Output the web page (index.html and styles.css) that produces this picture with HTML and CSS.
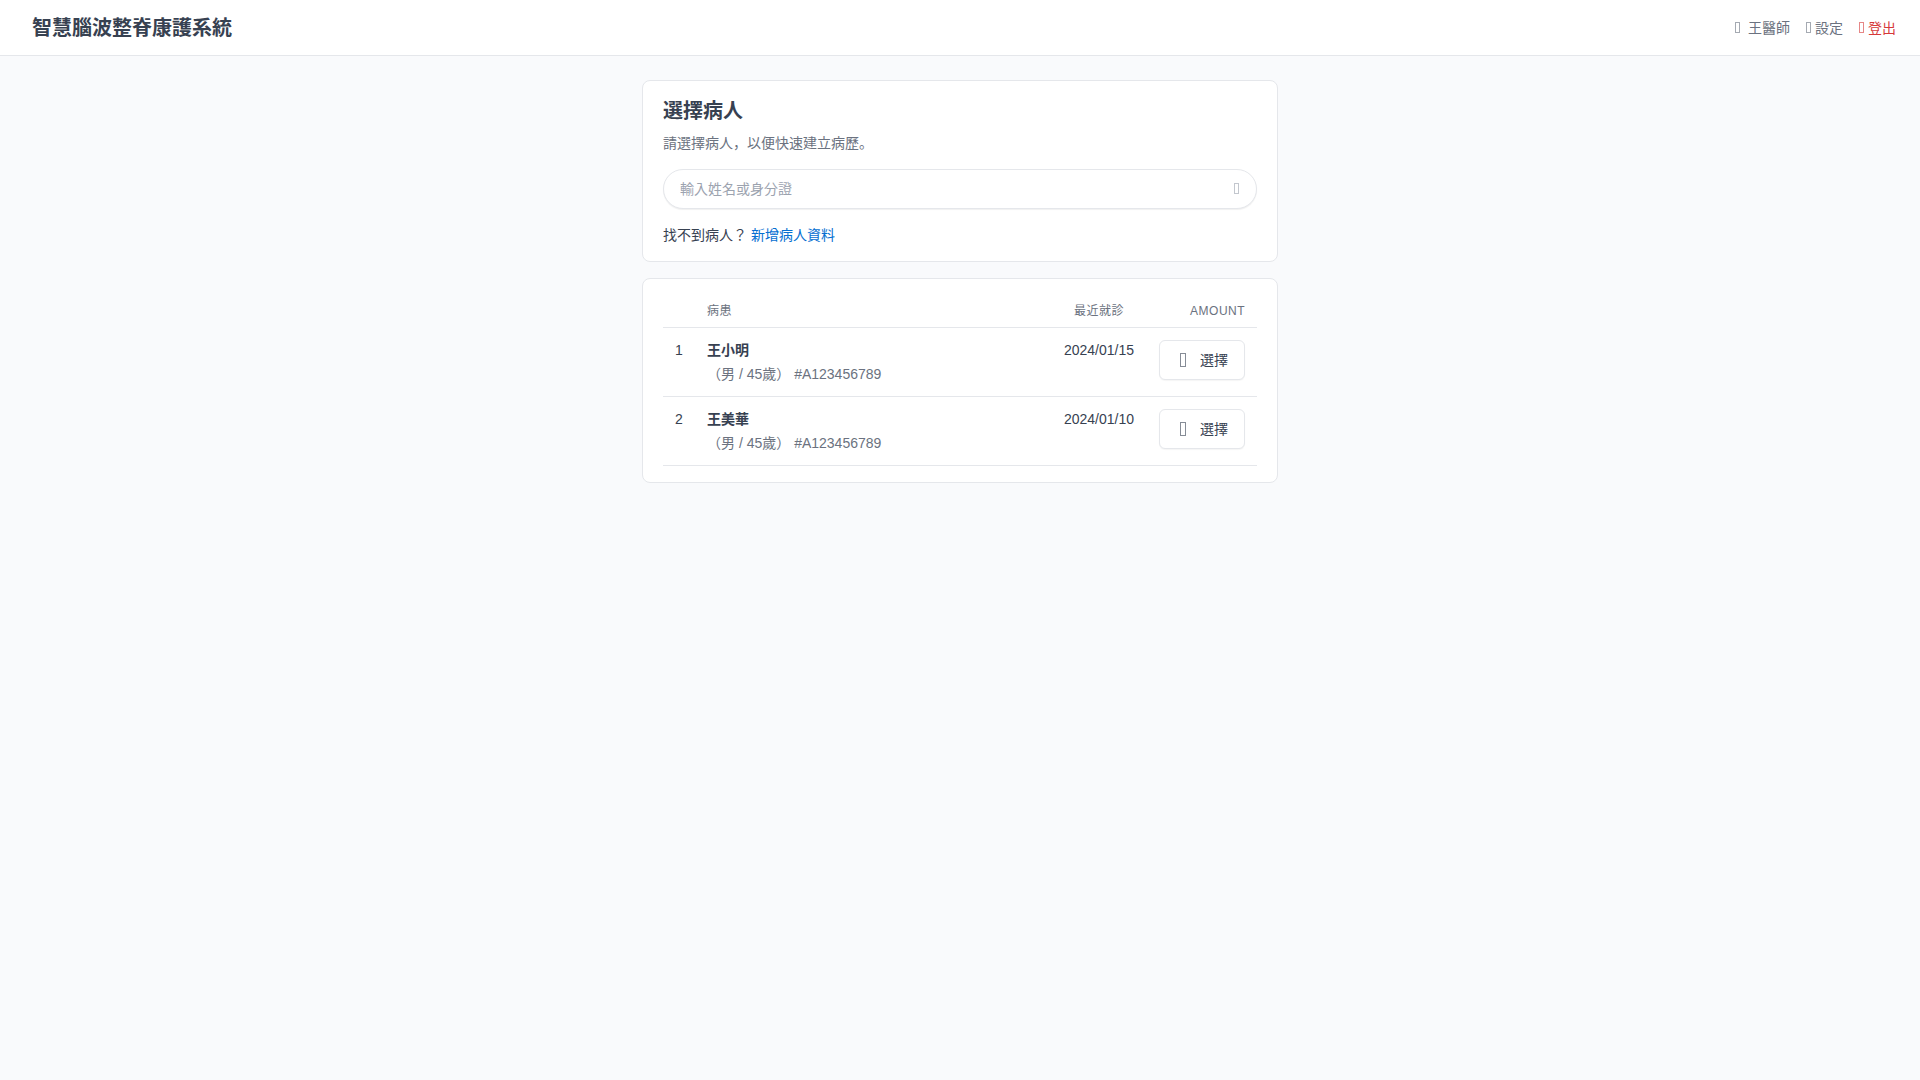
FILE: index.html
```html
<!DOCTYPE html>
<html lang="en">
<head>
<meta charset="utf-8">
<meta name="viewport" content="width=device-width, initial-scale=1">
<title>智慧腦波整脊康護系統</title>
<link rel="stylesheet" href="styles.css">
</head>
<body>
<header class="navbar">
  <h1 class="brand">智慧腦波整脊康護系統</h1>
  <nav class="nav">
    <a class="nav-link nav-user" href="#user"><svg class="icon" viewBox="0 0 5 11" aria-hidden="true"><rect x=".5" y=".5" width="4" height="10"/></svg>王醫師</a>
    <a class="nav-link" href="#settings"><svg class="icon" viewBox="0 0 5 11" aria-hidden="true"><rect x=".5" y=".5" width="4" height="10"/></svg>設定</a>
    <a class="nav-link nav-danger" href="#logout"><svg class="icon" viewBox="0 0 5 11" aria-hidden="true"><rect x=".5" y=".5" width="4" height="10"/></svg>登出</a>
  </nav>
</header>
<main class="container">
  <section class="card">
    <h2 class="card-title">選擇病人</h2>
    <p class="subtitle">請選擇病人，以便快速建立病歷。</p>
    <form class="search">
      <input class="search-input" type="text" placeholder="輸入姓名或身分證" aria-label="輸入姓名或身分證">
      <svg class="icon icon-search" viewBox="0 0 5 11" aria-hidden="true"><rect x=".5" y=".5" width="4" height="10"/></svg>
    </form>
    <p class="hint">找不到病人？ <a class="link" href="#new">新增病人資料</a></p>
  </section>
  <section class="card">
    <table class="table">
      <thead>
        <tr><th class="col-index"></th><th>病患</th><th class="col-date">最近就診</th><th class="col-action">Amount</th></tr>
      </thead>
      <tbody>
        <tr>
          <td class="col-index">1</td>
          <td><p class="name">王小明</p><p class="detail">（男 / 45歲） #A123456789</p></td>
          <td class="col-date">2024/01/15</td>
          <td class="col-action"><button class="btn" type="button"><svg class="icon icon-btn" viewBox="0 0 6 14" aria-hidden="true"><rect x=".5" y=".5" width="5" height="13"/></svg>選擇</button></td>
        </tr>
        <tr>
          <td class="col-index">2</td>
          <td><p class="name">王美華</p><p class="detail">（男 / 45歲） #A123456789</p></td>
          <td class="col-date">2024/01/10</td>
          <td class="col-action"><button class="btn" type="button"><svg class="icon icon-btn" viewBox="0 0 6 14" aria-hidden="true"><rect x=".5" y=".5" width="5" height="13"/></svg>選擇</button></td>
        </tr>
      </tbody>
    </table>
  </section>
</main>
</body>
</html>
```
FILE: styles.css
```css
* {
  box-sizing: border-box;
}

body {
  margin: 0;
  background: #f9fafc;
  color: #374151;
  font: 14px/20px "Liberation Sans", "Noto Sans CJK JP", sans-serif;
}

h1, h2, p {
  margin: 0;
}

a {
  text-decoration: none;
}

.icon {
  width: 5px;
  height: 11px;
  fill: none;
  stroke: currentColor;
  opacity: 0.6;
}

.navbar {
  display: flex;
  align-items: center;
  justify-content: space-between;
  height: 56px;
  padding: 0 24px 0 32px;
  background: #fff;
  border-bottom: 1px solid #e5e7eb;
}

.brand {
  font-size: 20px;
  font-weight: 600;
  line-height: 28px;
}

.nav {
  display: flex;
  gap: 16px;
}

.nav-link {
  display: flex;
  align-items: center;
  gap: 4px;
  color: #6b7280;
}

.nav-user {
  gap: 8px;
}

.nav-danger {
  color: #d63939;
}

.container {
  display: flex;
  flex-direction: column;
  gap: 16px;
  max-width: 636px;
  margin: 24px auto;
}

.card {
  padding: 16px 20px;
  background: #fff;
  border: 1px solid #e5e7eb;
  border-radius: 8px;
}

.card-title {
  margin-bottom: 8px;
  font-size: 20px;
  font-weight: 600;
  line-height: 28px;
}

.subtitle {
  color: #6b7280;
}

.search {
  position: relative;
  margin: 16px 0;
}

.search-input {
  display: block;
  width: 100%;
  height: 40px;
  padding: 0 40px 0 16px;
  border: 1px solid #e5e7eb;
  border-radius: 20px;
  background: #fff;
  box-shadow: 0 1px 1px rgba(0, 0, 0, 0.06);
  color: inherit;
  font: inherit;
}

.search-input::placeholder {
  color: #9ca3af;
  opacity: 1;
}

.icon-search {
  position: absolute;
  top: 14px;
  right: 18px;
  color: #9ca3af;
}

.link {
  color: #066fd1;
}

.table {
  width: 100%;
  border-collapse: separate;
  border-spacing: 0;
}

.table th {
  padding: 6px 12px;
  border-bottom: 1px solid #e5e7eb;
  color: #6b7280;
  font-size: 12px;
  font-weight: 400;
  letter-spacing: 0.04em;
  text-align: left;
  text-transform: uppercase;
}

.table td {
  padding: 12px;
  border-bottom: 1px solid #e5e7eb;
  vertical-align: top;
}

.table .col-index {
  width: 32px;
}

.table .col-date {
  width: 96px;
  text-align: center;
}

.table .col-action {
  width: 110px;
  text-align: right;
}

.name {
  margin-bottom: 4px;
  font-weight: 600;
}

.detail {
  color: #6b7280;
}

.btn {
  display: inline-flex;
  align-items: center;
  gap: 14px;
  width: 86px;
  height: 40px;
  padding: 0 16px 0 20px;
  border: 1px solid #e5e7eb;
  border-radius: 6px;
  background: #fff;
  box-shadow: 0 1px 1px rgba(0, 0, 0, 0.04);
  color: inherit;
  font: inherit;
  vertical-align: top;
}

.icon-btn {
  flex: none;
  width: 6px;
  height: 14px;
}
```
